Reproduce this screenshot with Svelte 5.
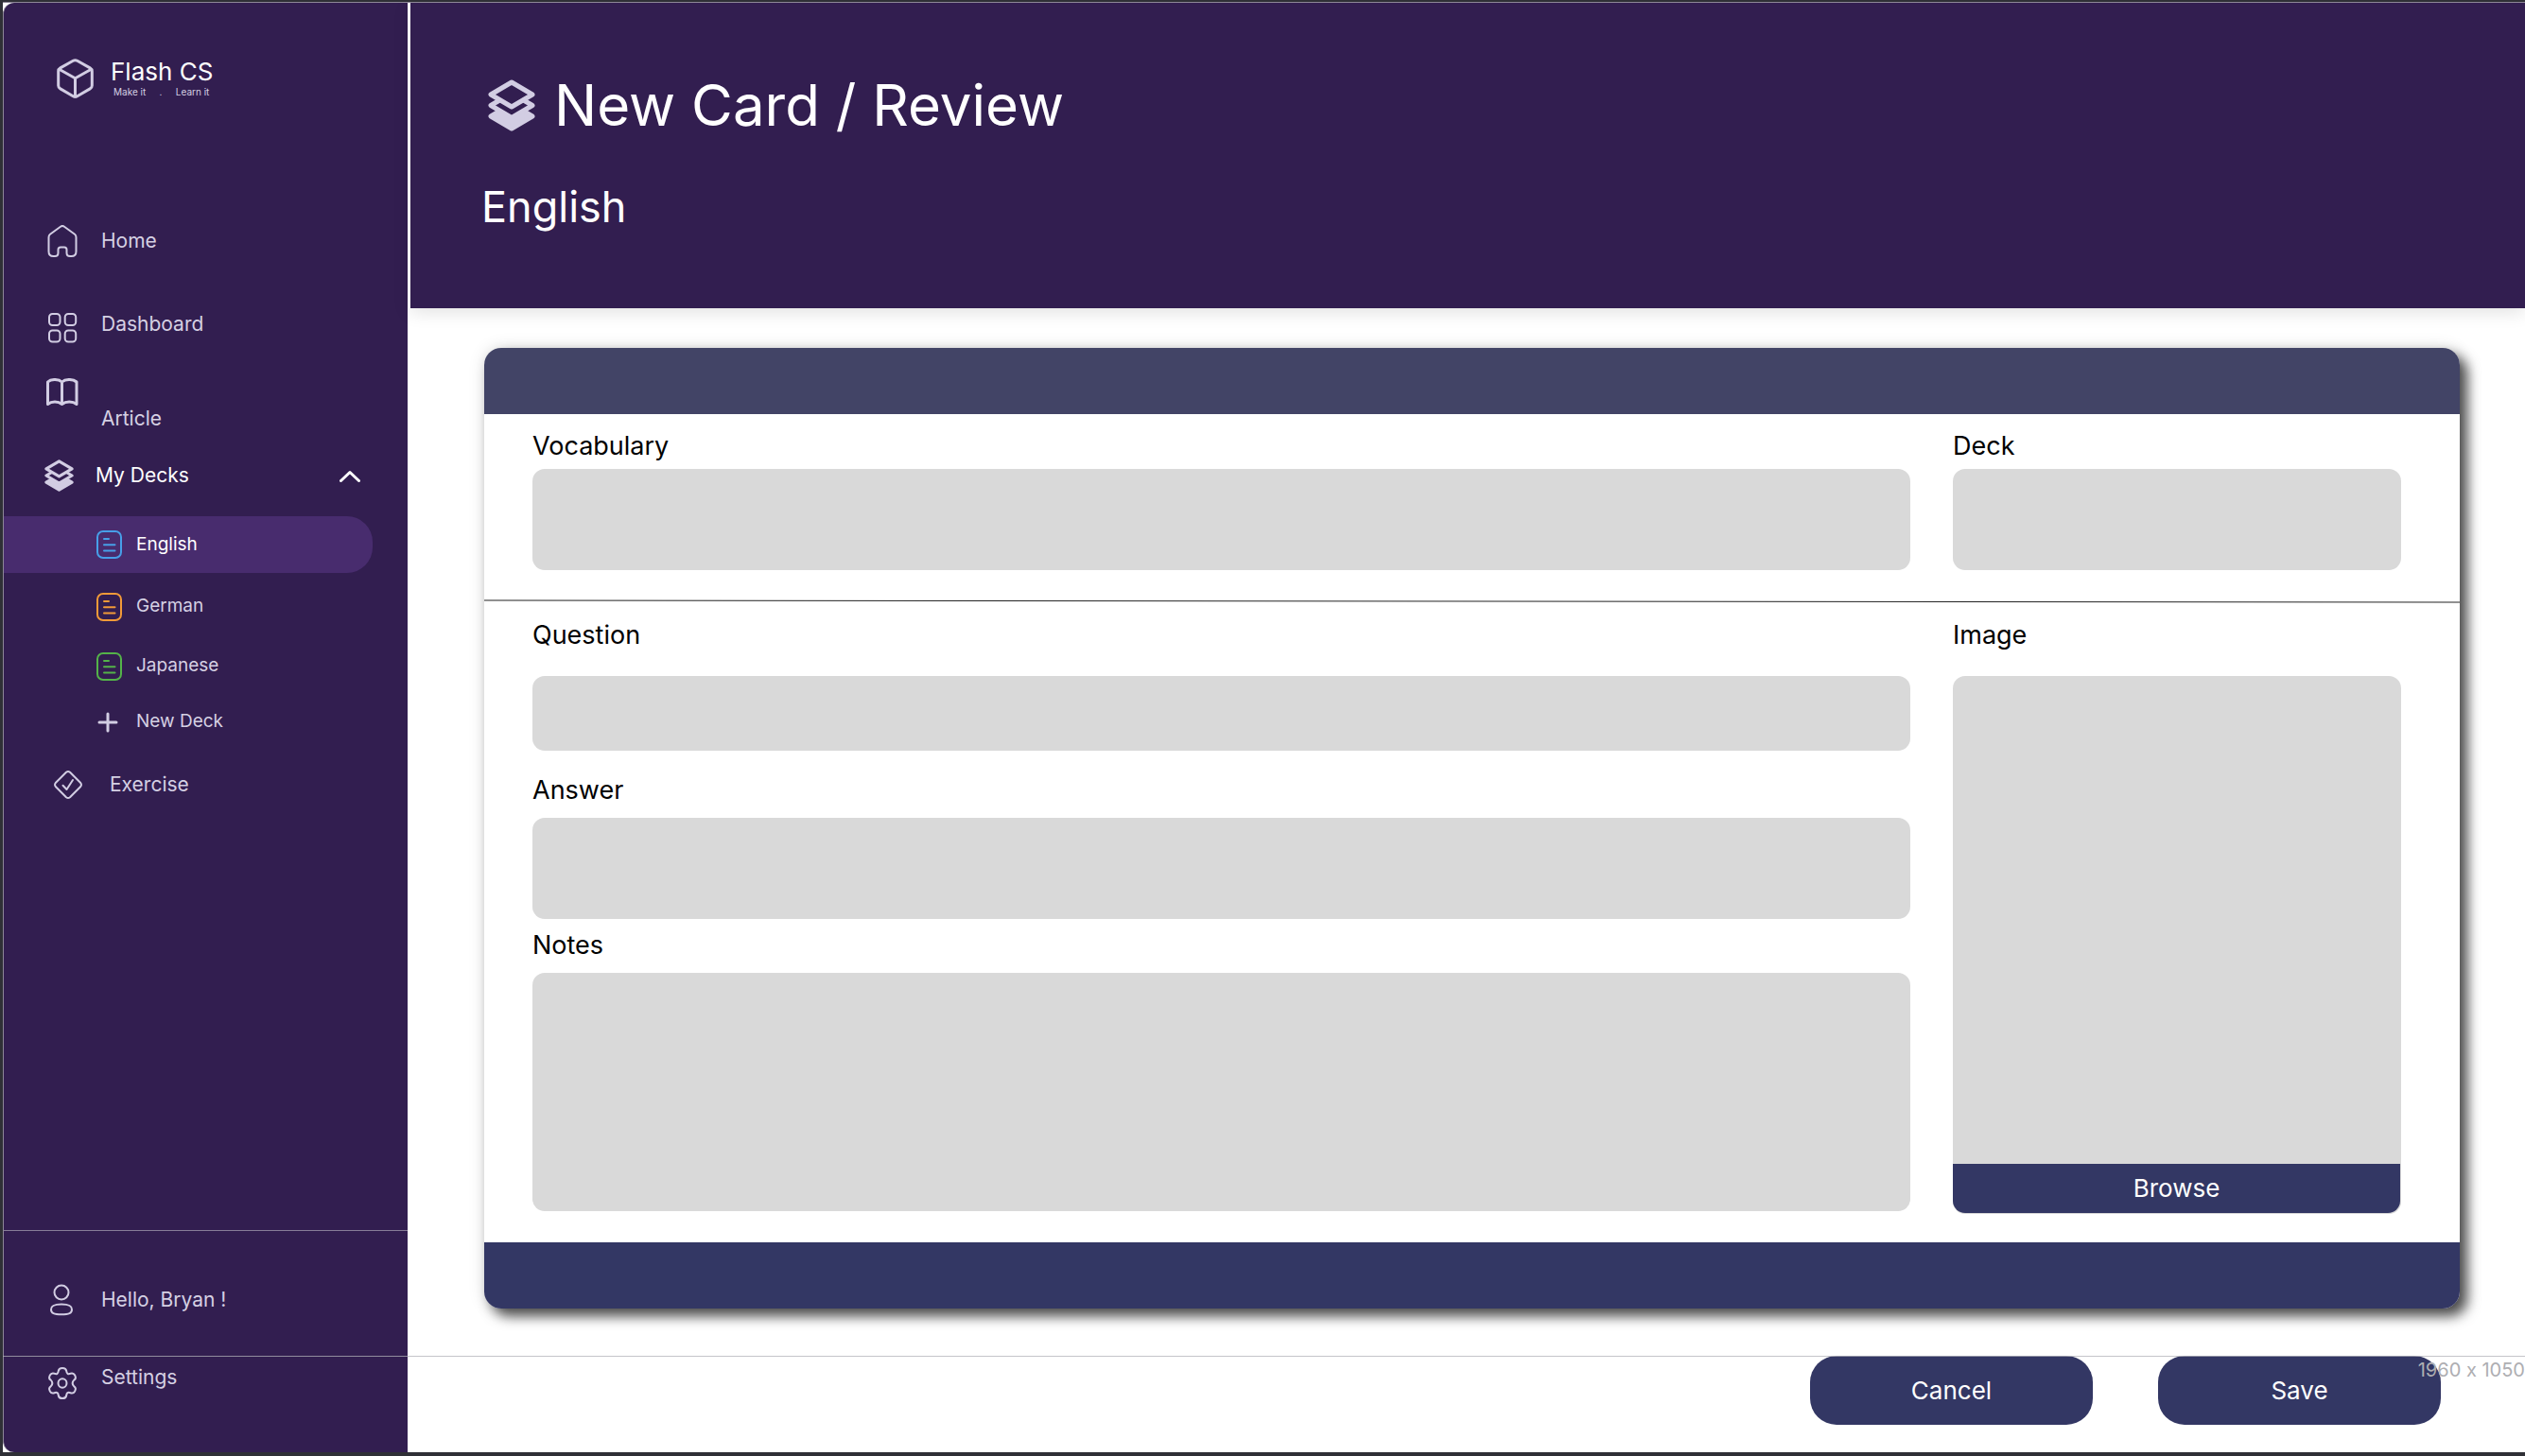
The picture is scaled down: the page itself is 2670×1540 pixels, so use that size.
<script>
  let decksOpen = $state(true);
  let current = $state('English');
  let fileInput;

  const decks = [
    { name: 'English', tone: 'blue' },
    { name: 'German', tone: 'orange' },
    { name: 'Japanese', tone: 'green' }
  ];
</script>

{#snippet layers(kind)}
  <svg class={kind} viewBox="0 0 50 55" aria-hidden="true">
    <path class="solid" d="M25 26 L3 39 L25 52 L47 39 Z" />
    <path class="sheet" d="M25 14.500 L3 27.500 L25 40.500 L47 27.500 Z" />
    <path class="sheet" d="M25 3 L3 16 L25 29 L47 16 Z" />
  </svg>
{/snippet}

<div class="canvas">
  <aside class="sidebar">
    <div class="brand">
      <svg class="cube" viewBox="0 0 39 42" aria-hidden="true">
        <path d="M17.300 2.300 Q19.500 1 21.700 2.300 L35.200 9.900 Q37.300 11.100 37.300 13.500 L37.300 28.500 Q37.300 30.700 35.200 31.900 L21.700 39.700 Q19.500 41 17.300 39.700 L3.800 31.900 Q1.700 30.700 1.700 28.500 L1.700 13.500 Q1.700 11.100 3.800 9.900 Z" />
        <path d="M3 11.500 L19.500 20.700 L36 11.500 M19.500 20.700 V40" />
      </svg>
      <div>
        <div class="name">Flash CS</div>
        <div class="motto"><span>Make it</span><span>.</span><span>Learn it</span></div>
      </div>
    </div>

    <nav aria-label="Main">
      <a class="item home" href="#home">
        <svg viewBox="0 0 34 34" aria-hidden="true">
          <path d="M15 1.700 Q17 .3 19 1.700 L30 9.800 Q31.500 11 31.500 13 V28 Q31.500 33 26.500 33 H25 Q21.500 33 21.500 29.500 V26 Q21.500 23.500 19 23.500 H15 Q12.500 23.500 12.500 26 V29.500 Q12.500 33 9 33 H7.500 Q2.500 33 2.500 28 V13 Q2.500 11 4 9.800 Z" />
        </svg>
        <span>Home</span>
      </a>
      <a class="item dashboard" href="#dashboard">
        <svg viewBox="0 0 34 34" aria-hidden="true">
          <rect x="3" y="2" width="11.500" height="12" rx="3.500" />
          <rect x="19.700" y="2" width="11.500" height="12" rx="3.500" />
          <rect x="3" y="19.500" width="11.500" height="12" rx="3.500" />
          <rect x="19.700" y="19.500" width="11.500" height="12" rx="3.500" />
        </svg>
        <span>Dashboard</span>
      </a>
      <a class="item article" href="#article">
        <svg class="book" viewBox="0 0 34 34" aria-hidden="true">
          <path d="M16.500 4 C13 .8 5 .5 1.500 4 V27.500 C5.500 24.300 12.500 24.300 16.500 27.500 C20.500 24.300 28 24.300 32 27.500 V4 C28 .5 20 .8 16.500 4 Z M16.500 4 V27.500" />
        </svg>
        <span>Article</span>
      </a>
      <button class="item group" type="button" aria-expanded={decksOpen} onclick={() => (decksOpen = !decksOpen)}>
        {@render layers('layers')}
        <span>My Decks</span>
        <svg class="chevron" class:closed={!decksOpen} viewBox="0 0 22 14" aria-hidden="true">
          <path d="M1.500 12.500 L11 3.500 L20.500 12.500" />
        </svg>
      </button>

      {#if decksOpen}
        <div class="decks">
          {#each decks as deck}
            <a class="deck" class:active={current === deck.name} href="#{deck.name}" onclick={() => (current = deck.name)}>
              <svg class={deck.tone} viewBox="0 0 27 30" aria-hidden="true">
                <rect x="1" y="1" width="25" height="28" rx="6" />
                <path d="M8 9 H13 M8 15.300 H19.500 M8 21.500 H19.500" />
              </svg>
              <span>{deck.name}</span>
            </a>
          {/each}
          <button class="deck add" type="button">
            <svg viewBox="0 0 27 30" aria-hidden="true"><path d="M3 15 H21 M12 6 V24" /></svg>
            <span>New Deck</span>
          </button>
        </div>
      {/if}

      <a class="item exercise" href="#exercise">
        <svg viewBox="0 0 30 30" aria-hidden="true">
          <path d="M13 1.800 Q15 .3 17 1.800 L28.200 13 Q29.700 15 28.200 17 L17 28.200 Q15 29.700 13 28.200 L1.800 17 Q.3 15 1.800 13 Z" />
          <path class="tick" d="M9.500 15.800 L13.500 20 L20 10" />
        </svg>
        <span>Exercise</span>
      </a>
    </nav>

    <footer class="account">
      <a class="item user" href="#profile">
        <svg viewBox="0 0 34 34" aria-hidden="true">
          <circle cx="16" cy="9" r="7.500" />
          <path d="M16 21.500 C24 21.500 27 23 27 27 C27 31 24 32.300 16 32.300 C8 32.300 5 31 5 27 C5 23 8 21.500 16 21.500 Z" />
        </svg>
        <span>Hello, Bryan !</span>
      </a>
      <a class="item settings" href="#settings">
        <svg viewBox="0 0 34 34" aria-hidden="true">
          <ellipse cx="17" cy="17" rx="4.500" ry="4.700" />
          <path d="M12.800 4 Q13.200 1 17 1 Q20.800 1 21.200 4 Q21.600 8.200 25.500 6.800 Q28.500 5.600 30.200 8.600 Q32 12 29.300 13.600 Q26 17 29.300 20.400 Q32 22 30.200 25.400 Q28.500 28.400 25.500 27.200 Q21.600 25.800 21.200 30 Q20.800 33 17 33 Q13.200 33 12.800 30 Q12.400 25.800 8.500 27.200 Q5.500 28.400 3.800 25.400 Q2 22 4.700 20.400 Q8 17 4.700 13.600 Q2 12 3.800 8.600 Q5.500 5.600 8.500 6.800 Q12.400 8.200 12.800 4 Z" />
        </svg>
        <span>Settings</span>
      </a>
    </footer>
  </aside>

  <main>
    <header class="top">
      <h1>{@render layers('layers large')}<span>New Card / Review</span></h1>
      <h2>{current}</h2>
    </header>

    <form class="editor" onsubmit={(e) => e.preventDefault()}>
      <div class="card">
        <div class="bar head"></div>
        <section class="row">
          <div class="field tight">
            <label for="vocabulary">Vocabulary</label>
            <input id="vocabulary" type="text" />
          </div>
          <div class="field tight">
            <label for="deck">Deck</label>
            <select id="deck"><option value=""></option></select>
          </div>
        </section>
        <svg class="rule" viewBox="0 0 100 4" preserveAspectRatio="none" aria-hidden="true">
          <line x1="0" y1="1" x2="100" y2="3" />
        </svg>
        <section class="row lower">
          <div class="stack">
            <div class="field loose">
              <label for="question">Question</label>
              <input id="question" class="short" type="text" />
            </div>
            <div class="field answer">
              <label for="answer">Answer</label>
              <input id="answer" type="text" />
            </div>
            <div class="field">
              <label for="notes">Notes</label>
              <textarea id="notes"></textarea>
            </div>
          </div>
          <div class="field loose">
            <label for="image">Image</label>
            <div class="drop">
              <input id="image" class="file" type="file" accept="image/*" tabindex="-1" bind:this={fileInput} />
              <button class="browse" type="button" onclick={() => fileInput.click()}>Browse</button>
            </div>
          </div>
        </section>
        <div class="bar foot"></div>
      </div>

      <div class="actions">
        <button type="button">Cancel</button>
        <button type="submit">Save</button>
      </div>
    </form>
  </main>

  <div class="guide"></div>
  <div class="dimensions">1960 x 1050</div>
</div>

<style>
  :global(body) {
    background: #2f3036;
  }

  * {
    box-sizing: border-box;
  }

  .canvas {
    position: relative;
    display: grid;
    grid-template-columns: 428px minmax(0, 1fr);
    column-gap: 3px;
    min-height: calc(100vh - 6px);
    margin: 2px 0 4px 3px;
    border-top: 1px solid #8d8797;
    background: #fff;
    font-family: Inter, 'Liberation Sans', sans-serif;
    overflow: hidden;
  }

  button,
  input,
  select,
  textarea {
    margin: 0;
    border: 0;
    font: inherit;
  }

  a {
    color: inherit;
    text-decoration: none;
  }

  svg {
    flex: none;
    fill: none;
    stroke: #d2cde3;
    stroke-width: 2;
    stroke-linecap: round;
    stroke-linejoin: round;
  }

  /* Sidebar */
  .sidebar {
    display: flex;
    flex-direction: column;
    border-left: 1px solid #8d8797;
    border-radius: 12px 0 0 12px;
    background: #321e50;
    color: #d5d0e3;
    font-size: 21px;
    line-height: 26px;
  }

  .brand {
    display: flex;
    gap: 18px;
    padding: 57px 0 0 56px;
  }

  .cube {
    width: 39px;
    height: 42px;
    margin-top: 2px;
    stroke-width: 3;
  }

  .name {
    color: #fff;
    font-size: 26px;
    line-height: 32px;
  }

  .motto {
    display: flex;
    justify-content: space-between;
    padding: 0 4px 0 3px;
    font-size: 10px;
    line-height: 10px;
  }

  nav {
    padding-top: 134px;
  }

  .item {
    display: flex;
    align-items: center;
    gap: 24px;
    padding: 0 0 0 45px;
  }

  .item svg {
    width: 34px;
    height: 34px;
  }

  .home {
    margin-bottom: 58px;
  }

  .dashboard {
    align-items: flex-start;
    margin-bottom: 36px;
  }

  .article {
    align-items: flex-start;
    margin-bottom: 30px;
  }

  .article span {
    padding-top: 30px;
  }

  .item .book {
    stroke-width: 3;
  }

  .group {
    width: 100%;
    gap: 23px;
    padding: 0 50px 0 43px;
    background: none;
    color: #fff;
    text-align: left;
  }

  .item .layers {
    width: 31px;
  }

  .layers .solid,
  .layers .sheet {
    fill: #d2cde3;
    stroke-width: 5;
  }

  .layers .sheet {
    fill: #321e50;
  }

  .item .chevron {
    width: 22px;
    height: 14px;
    margin-left: auto;
    stroke: #fff;
    stroke-width: 3;
  }

  .chevron.closed {
    rotate: 180deg;
  }

  .decks {
    display: flex;
    flex-direction: column;
    gap: 33px;
    padding-top: 26px;
    font-size: 19px;
    line-height: 24px;
  }

  .deck {
    display: flex;
    align-items: center;
    gap: 15px;
    height: 30px;
    padding: 0 0 0 98px;
    background: none;
    color: inherit;
  }

  .deck span {
    padding-bottom: 2px;
  }

  .deck.active {
    height: 60px;
    margin: 0 37px -12px 0;
    border-radius: 0 27px 27px 0;
    background: #482c6e;
    color: #fff;
  }

  .deck.active span {
    padding: 0;
  }

  .deck svg {
    width: 27px;
    height: 30px;
  }

  .deck .blue {
    stroke: #479fe8;
  }

  .deck .orange {
    stroke: #f19a38;
  }

  .deck .green {
    stroke: #54b349;
  }

  .add {
    margin-top: -4px;
  }

  .add svg {
    stroke-width: 3;
  }

  .exercise {
    gap: 29px;
    padding: 36px 0 0 53px;
  }

  .item.exercise svg {
    width: 30px;
    height: 30px;
  }

  .account {
    margin-top: auto;
    border-top: 1px solid #877d98;
  }

  .user {
    height: 133px;
    padding-top: 13px;
  }

  .settings {
    align-items: flex-start;
    height: 101px;
    padding-top: 9px;
  }

  .settings svg {
    margin-top: 2px;
  }

  /* Page header */
  main {
    display: flex;
    flex-direction: column;
  }

  .top {
    padding: 69px 75px 78px;
    background: #321e50;
    color: #fff;
    box-shadow: 0 4px 18px rgb(0 0 0 / 12%);
  }

  h1,
  h2 {
    margin: 0;
    font-weight: 400;
  }

  h1 {
    display: flex;
    align-items: center;
    gap: 20px;
    padding-left: 7px;
    font-size: 60px;
    line-height: 78px;
  }

  .large {
    width: 50px;
    height: 55px;
  }

  h2 {
    padding-top: 40px;
    font-size: 45px;
    line-height: 58px;
  }

  /* Card editor */
  .editor {
    padding: 42px 69px 29px 78px;
  }

  .card {
    border-radius: 18px;
    background: #fff;
    box-shadow:
      8px 8px 14px rgb(0 0 0 / 70%),
      0 0 18px rgb(0 0 0 / 12%);
    color: #000;
    font-size: 27px;
    line-height: 34px;
  }

  .bar {
    height: 70px;
  }

  .head {
    border-radius: 18px 18px 0 0;
    background: #424466;
  }

  .foot {
    border-radius: 0 0 18px 18px;
    background: #333764;
  }

  .row {
    display: grid;
    grid-template-columns: minmax(0, 1fr) 474px;
    column-gap: 45px;
    padding: 17px 62px 31px 51px;
  }

  .rule {
    display: block;
    width: 100%;
    height: 4px;
  }

  .rule line {
    stroke: #222;
    stroke-width: 1;
    vector-effect: non-scaling-stroke;
  }

  .lower {
    padding: 17px 62px 30px 51px;
  }

  .stack {
    padding-bottom: 3px;
  }

  .field {
    display: flex;
    flex-direction: column;
    gap: 12px;
  }

  .tight {
    gap: 7px;
  }

  .loose {
    gap: 26px;
  }

  .answer {
    padding: 25px 0 11px;
  }

  .field input:not(.file),
  .field select,
  .field textarea {
    width: 100%;
    height: 107px;
    padding: 0 20px;
    border-radius: 13px;
    background: #d9d9d9;
    appearance: none;
  }

  .field .short:not(.file) {
    height: 79px;
  }

  .field textarea {
    display: block;
    height: 252px;
    padding: 16px 20px;
    resize: none;
  }

  .drop {
    display: flex;
    flex: 1;
    align-items: flex-end;
    padding: 0 1px 1px 0;
    border-radius: 13px;
    background: #d9d9d9;
  }

  .file {
    position: absolute;
    width: 1px;
    height: 1px;
    opacity: 0;
  }

  .browse {
    flex: 1;
    height: 52px;
    border-radius: 0 0 13px 13px;
    background: #333764;
    color: #fff;
    font-size: 26px;
  }

  .actions {
    display: flex;
    justify-content: flex-end;
    gap: 69px;
    padding: 50px 20px 0 0;
  }

  .actions button {
    width: 299px;
    height: 73px;
    border-radius: 28px;
    background: #333764;
    color: #fff;
    font-size: 26px;
  }

  /* Frame guides laid over the page */
  .guide {
    position: absolute;
    right: 0;
    bottom: 101px;
    left: 0;
    height: 1px;
    background: rgb(178 178 184 / 75%);
    pointer-events: none;
  }

  .dimensions {
    position: absolute;
    right: 0;
    bottom: 74px;
    color: #aeaeb2;
    font-size: 20px;
    line-height: 26px;
    font-feature-settings: 'calt' 0;
    white-space: nowrap;
    pointer-events: none;
  }
</style>
